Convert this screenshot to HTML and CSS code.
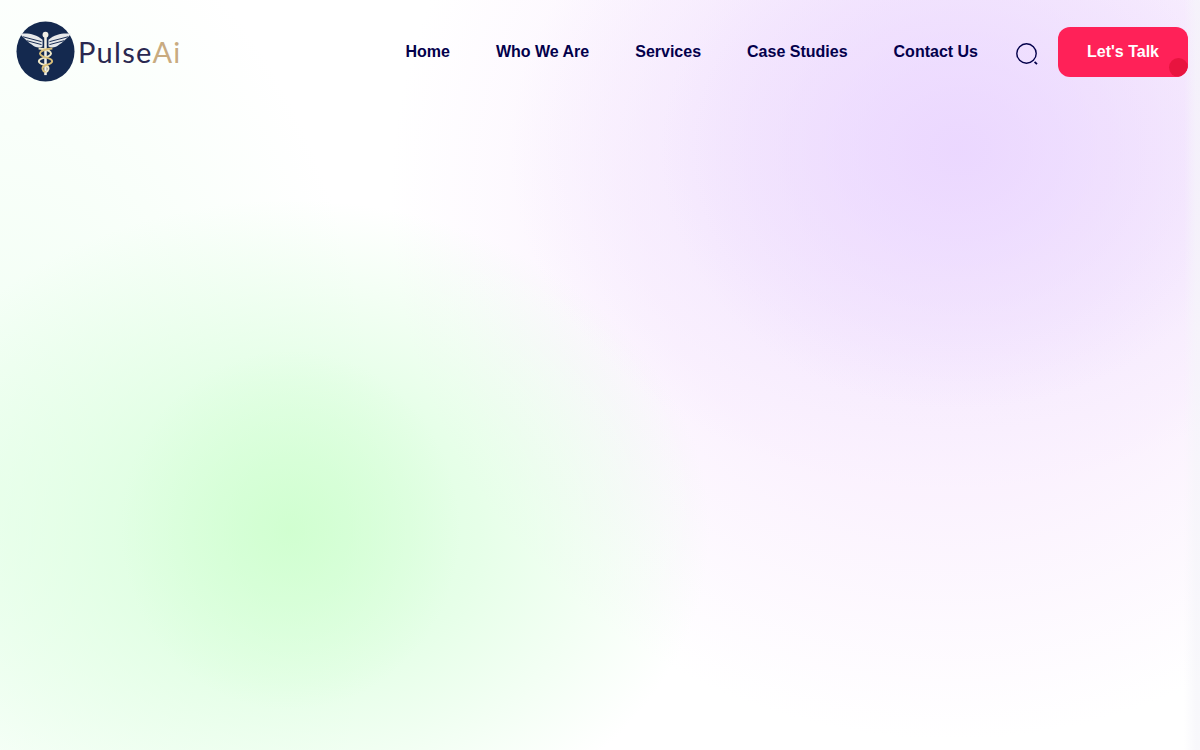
FILE: index.html
```html
<!DOCTYPE html>
<html lang="en">
<head>
    <meta charset="UTF-8">
    <meta name="viewport" content="width=device-width, initial-scale=1.0">
    <title>PulseAi</title>
    <link rel="stylesheet" href="styles.css">
</head>
<body>
    <header class="site-header">
        <a href="#" class="logo">
            <svg class="logo-mark" viewBox="0 0 60 62" aria-hidden="true">
                <ellipse cx="30" cy="31" rx="29.5" ry="30.5" fill="#14294f"/>
                <!-- wings -->
                <path d="M27 19 C20 13 12 12 4 13 C6 15 7 17 9 18 C11 20 13 22 16 24 C19 27 24 28 27 26Z" fill="#e6e8ea"/>
                <path d="M33 19 C40 13 48 12 56 13 C54 15 53 17 51 18 C49 20 47 22 44 24 C41 27 36 28 33 26Z" fill="#e6e8ea"/>
                <path d="M7 16 L26 21 M11 20 L26 24 M53 16 L34 21 M49 20 L34 24" stroke="#14294f" stroke-width="1" fill="none"/>
                <!-- staff -->
                <circle cx="30" cy="14" r="3" fill="#f1efe6"/>
                <path d="M30 15 V55" stroke="#f1efe6" stroke-width="2.6"/>
                <!-- snakes -->
                <path d="M23 28 C36 29 40 34 30 37 C21 39 21 43 30 45 C35 47 33 51 30 52" stroke="#f1e9c8" stroke-width="2" fill="none"/>
                <path d="M37 28 C24 29 20 34 30 37 C39 39 39 43 30 45 C25 47 27 51 30 52" stroke="#d9bf7a" stroke-width="2" fill="none"/>
            </svg>
            <span class="logo-text">Pulse<span class="logo-accent">Ai</span></span>
        </a>

        <nav class="main-nav">
            <a href="#">Home</a>
            <a href="#">Who We Are</a>
            <a href="#">Services</a>
            <a href="#">Case Studies</a>
            <a href="#">Contact Us</a>
        </nav>

        <button class="search-btn" type="button" aria-label="Search">
            <svg viewBox="0 0 24 24" width="24" height="24" fill="none" stroke="#03004b" aria-hidden="true">
                <circle cx="11.5" cy="11.5" r="9.7" stroke-width="1.4"/>
                <path d="M19.6 19.8 L22 22.2" stroke-width="1.8"/>
            </svg>
        </button>

        <a href="#" class="talk-btn">Let's Talk<span class="talk-dot"></span></a>
    </header>
</body>
</html>
```

FILE: styles.css
```css
* {
    margin: 0;
    padding: 0;
    box-sizing: border-box;
}

html, body {
    height: 100%;
}

body {
    font-family: "Liberation Sans", Arial, sans-serif;
    overflow: hidden;
    background:
        linear-gradient(to right, hsla(240, 30%, 97%, 0) 1184px, hsla(240, 30%, 97%, 0.7) 1196px),
        radial-gradient(ellipse 170px 180px at 290px 530px, hsla(118, 100%, 90%, 0.7) 0%, hsla(120, 100%, 90%, 0) 100%),
        radial-gradient(ellipse 420px 330px at 290px 530px, hsla(125, 100%, 92%, 0.95) 0%, hsla(125, 100%, 93%, 0.7) 45%, hsla(130, 100%, 95%, 0) 100%),
        radial-gradient(ellipse 300px 260px at 960px 150px, hsla(270, 100%, 92%, 0.9) 0%, hsla(270, 100%, 93%, 0) 100%),
        radial-gradient(ellipse 440px 340px at 950px 150px, hsla(270, 90%, 94%, 0.9) 0%, hsla(272, 90%, 95%, 0.7) 55%, hsla(275, 90%, 96%, 0) 100%),
        radial-gradient(ellipse 560px 540px at 950px 200px, hsl(285, 85%, 97%) 0%, hsla(285, 85%, 97%, 0.9) 55%, hsla(285, 85%, 98%, 0) 100%),
        radial-gradient(ellipse 380px 620px at 0px 500px, hsl(130, 100%, 97%) 0%, hsla(130, 100%, 98%, 0) 100%),
        #fff;
}

.site-header {
    display: flex;
    align-items: center;
    padding: 27px 12px 0 16px;
    height: 77px;
}

.logo {
    display: flex;
    align-items: center;
    gap: 3px;
    text-decoration: none;
    margin-right: auto;
    position: relative;
    top: -1px;
}

.logo-mark {
    width: 59px;
    height: 61px;
    flex-shrink: 0;
}

.logo-text {
    font-family: Lato, sans-serif;
    font-size: 29px;
    letter-spacing: 1.3px;
    color: #2a2850;
}

.logo-accent {
    color: #c9ab80;
}

.main-nav {
    display: flex;
    gap: 46px;
}

.main-nav a {
    color: #03004b;
    font-size: 16px;
    font-weight: 700;
    text-decoration: none;
}

.search-btn {
    display: flex;
    margin: 3px 19px 0 37px;
    border: none;
    background: none;
    cursor: pointer;
}

.talk-btn {
    position: relative;
    overflow: hidden;
    display: flex;
    align-items: center;
    justify-content: center;
    width: 130px;
    height: 50px;
    border-radius: 12px;
    background: #ff2158;
    color: #fff;
    font-size: 16px;
    font-weight: 700;
    text-decoration: none;
}

.talk-dot {
    position: absolute;
    right: 0;
    bottom: 0;
    width: 19px;
    height: 19px;
    border-radius: 50%;
    background: #e8143f;
}
```
